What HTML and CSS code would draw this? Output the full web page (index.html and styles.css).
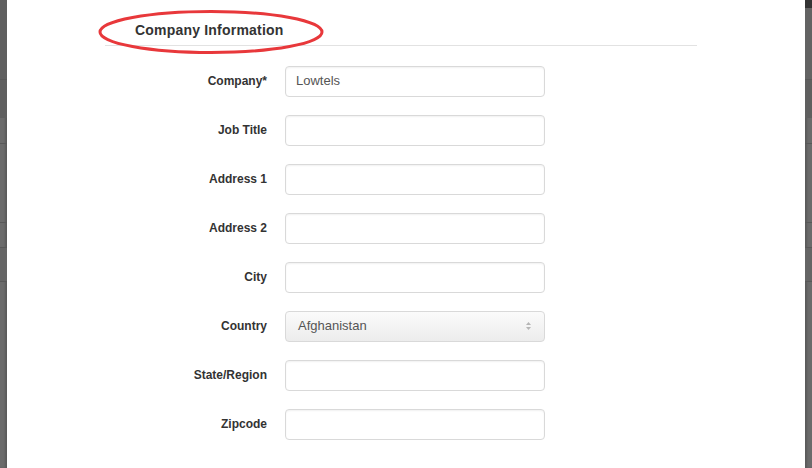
FILE: index.html
```html
<!DOCTYPE html>
<html lang="en">
<head>
    <meta charset="UTF-8">
    <title>Company Information</title>
    <link rel="stylesheet" href="styles.css">
</head>
<body>
    <div class="screen">
        <div class="side side-left">
            <div class="seg s1"></div>
            <div class="seg s2"></div>
            <div class="seg s3"></div>
            <div class="seg s4"></div>
            <div class="seg s5"></div>
            <div class="seg s6"></div>
        </div>

        <div class="modal">
            <div class="fieldset">
                <div class="legend">
                    <span class="legend-text">Company Information</span>
                    <svg class="circle-mark" width="230" height="48" viewBox="0 0 230 48">
                        <ellipse cx="115" cy="23" rx="111" ry="20.5" fill="none" stroke="#e8383b" stroke-width="3"/>
                    </svg>
                </div>

                <div class="form-row">
                    <label class="form-label">Company*</label>
                    <div class="form-input">Lowtels</div>
                </div>
                <div class="form-row">
                    <label class="form-label">Job Title</label>
                    <div class="form-input"></div>
                </div>
                <div class="form-row">
                    <label class="form-label">Address 1</label>
                    <div class="form-input"></div>
                </div>
                <div class="form-row">
                    <label class="form-label">Address 2</label>
                    <div class="form-input"></div>
                </div>
                <div class="form-row">
                    <label class="form-label">City</label>
                    <div class="form-input"></div>
                </div>
                <div class="form-row">
                    <label class="form-label">Country</label>
                    <div class="form-input form-select">
                        <span>Afghanistan</span>
                        <svg class="select-arrows" width="7" height="10" viewBox="0 0 7 10">
                            <path d="M3.5 1 L6 4 L1 4 Z" fill="#b5b5b5"/>
                            <path d="M3.5 9 L6 6 L1 6 Z" fill="#b5b5b5"/>
                        </svg>
                    </div>
                </div>
                <div class="form-row">
                    <label class="form-label">State/Region</label>
                    <div class="form-input"></div>
                </div>
                <div class="form-row">
                    <label class="form-label">Zipcode</label>
                    <div class="form-input"></div>
                </div>
            </div>
        </div>

        <div class="side side-right">
            <div class="seg top-bar"></div>
            <div class="seg s1r"></div>
            <div class="seg s2"></div>
            <div class="seg s3"></div>
            <div class="seg s4"></div>
            <div class="seg s5"></div>
            <div class="seg s6"></div>
        </div>
    </div>
</body>
</html>
```

FILE: styles.css
```css
* {
    margin: 0;
    padding: 0;
    box-sizing: border-box;
}

body {
    font-family: "Liberation Sans", Arial, sans-serif;
    background: #fff;
    color: #333;
}

.screen {
    display: flex;
    width: 812px;
    height: 468px;
    overflow: hidden;
}

/* dimmed page showing at the edges */
.side {
    width: 7px;
    flex: none;
    display: flex;
    flex-direction: column;
    background: #6b6b6b;
}

.side-left {
    box-shadow: inset -2px 0 2px rgba(0, 0, 0, 0.15);
}

.side-right {
    box-shadow: inset 2px 0 2px rgba(0, 0, 0, 0.15);
}

.seg {
    flex: none;
    border-bottom: 1px solid #585858;
}

.s1 { height: 80px; background: #5f5f5f; }
.s1r { height: 72px; background: #636363; }
.top-bar { height: 8px; background: #333; border-bottom: none; }
.s2 { height: 38px; background: #5f5f5f; border-bottom: none; }
.s3 { height: 26px; }
.s4 { height: 79px; }
.s5 { height: 25px; }
.s6 { height: 34px; background: #656565; }

.modal {
    flex: 1;
    background: #fff;
}

.fieldset {
    width: 592px;
    margin-left: 98px;
}

.legend {
    position: relative;
    padding: 20px 0 5px 30px;
    border-bottom: 1px solid #e2e2e2;
    margin-bottom: 20px;
}

.legend-text {
    display: block;
    font-size: 14px;
    font-weight: bold;
    line-height: 20px;
    color: #333;
    letter-spacing: 0.2px;
}

.circle-mark {
    position: absolute;
    left: -9px;
    top: 9px;
}

.form-row {
    display: flex;
    align-items: center;
    margin-bottom: 18px;
}

.form-label {
    width: 162px;
    margin-right: 18px;
    padding-bottom: 2px;
    text-align: right;
    font-size: 12px;
    font-weight: bold;
    color: #333;
}

.form-input {
    width: 260px;
    height: 31px;
    padding: 0 10px 2px;
    display: flex;
    align-items: center;
    border: 1px solid #d9d9d9;
    border-radius: 4px;
    box-shadow: inset 0 1px 2px rgba(0, 0, 0, 0.06);
    font-size: 13px;
    color: #555;
    background: #fff;
}

.form-select {
    justify-content: space-between;
    padding: 0 12px 2px 12px;
    background: linear-gradient(#fbfbfb, #ececec);
    box-shadow: none;
}

.select-arrows {
    display: block;
}
```
